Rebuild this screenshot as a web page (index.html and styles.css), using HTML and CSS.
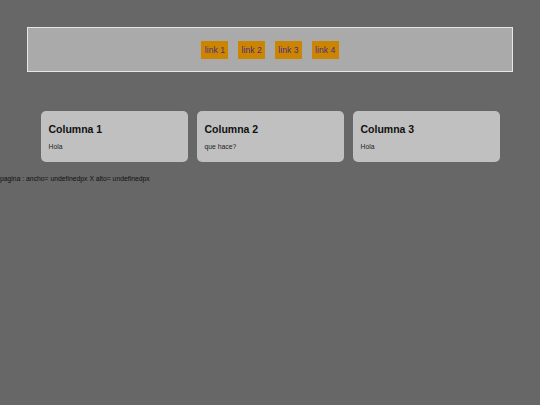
FILE: index.html
```html
<!DOCTYPE html>
<html lang="es">
<head>
    <meta charset="UTF-8">
    <meta name="viewport" content="width=device-width, initial-scale=1.0">
    <title>Pagina</title>
    <link rel="stylesheet" href="styles.css">
</head>
<body>

<header class="cabecera">
    <nav class="menu">
        <a href="#" class="enlace">link 1</a>
        <a href="#" class="enlace">link 2</a>
        <a href="#" class="enlace">link 3</a>
        <a href="#" class="enlace">link 4</a>
    </nav>
</header>

<section class="columnas">
    <div class="columna">
        <h3>Columna 1</h3>
        <p>Hola</p>
    </div>
    <div class="columna">
        <h3>Columna 2</h3>
        <p>que hace?</p>
    </div>
    <div class="columna">
        <h3>Columna 3</h3>
        <p>Hola</p>
    </div>
</section>

<p class="medidas">pagina : ancho= undefinedpx X alto= undefinedpx</p>

</body>
</html>
```

FILE: styles.css
```css
body {
    font-family: "Liberation Sans", Arial, sans-serif;
    background-color: #676767;
    margin: 0;
    padding: 0;
}

.cabecera {
    width: 90%;
    box-sizing: border-box;
    margin: 27px auto 0;
    height: 45px;
    background-color: #aaaaaa;
    border: 1px solid #e6e6e6;
    display: flex;
    align-items: center;
    justify-content: center;
}

.menu {
    display: flex;
    gap: 9.7px;
}

.enlace {
    background-color: #cc8500;
    color: #4b2a86;
    font-size: 8.6px;
    padding: 4px 3.5px;
    text-decoration: none;
}

.columnas {
    width: 85%;
    margin: 39px auto 0;
    display: flex;
    gap: 9px;
}

.columna {
    flex: 1;
    background-color: #c0c0c0;
    border-radius: 5px;
    padding: 12px 8px 11px;
}

.columna h3 {
    margin: 0 0 8px;
    font-size: 10.5px;
    line-height: 12px;
    color: #111;
}

.columna p {
    margin: 0;
    font-size: 6.8px;
    line-height: 8px;
    color: #222;
}

.medidas {
    margin: 13px 0 0;
    font-size: 6.8px;
    line-height: 8px;
    color: #111;
}
```
